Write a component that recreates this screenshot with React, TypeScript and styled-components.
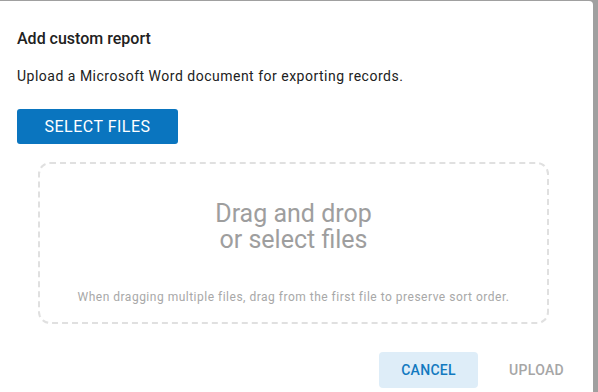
import React from 'react'
import styled, { createGlobalStyle } from 'styled-components'

const GlobalStyle = createGlobalStyle`
  html, body {
    margin: 0;
    padding: 0;
    background: #a0a0a0;
    font-family: Roboto, "Liberation Sans", sans-serif;
  }
`

const Backdrop = styled.div`
  width: 598px;
  height: 392px;
  padding-top: 1px;
  box-sizing: border-box;
  background: #a0a0a0;
  overflow: hidden;
`

const Dialog = styled.div`
  width: 593px;
  height: 400px;
  background: #fff;
  border-top-right-radius: 4px;
  padding: 26px 17px 0 17px;
  box-sizing: border-box;
  display: flex;
  flex-direction: column;
`

const Title = styled.h2`
  margin: 0;
  font-size: 16px;
  line-height: 24px;
  font-weight: 500;
  color: #212121;
`

const Description = styled.p`
  margin: 15px 0 0 0;
  font-size: 14px;
  line-height: 20px;
  letter-spacing: 0.5px;
  color: #212121;
`

const PrimaryButton = styled.button`
  align-self: flex-start;
  margin-top: 23px;
  width: 161px;
  height: 35px;
  border: none;
  border-radius: 3px;
  background: #0a75bf;
  color: #fff;
  font-family: inherit;
  font-size: 16px;
  font-weight: 400;
  text-transform: uppercase;
  letter-spacing: 0.5px;
  cursor: pointer;
`

const DropZone = styled.div`
  margin: 18px 27px 0 21px;
  height: 162px;
  border: 2px dashed #e0e0e0;
  border-radius: 12px;
  box-sizing: border-box;
  display: flex;
  flex-direction: column;
  align-items: center;
`

const DropTitle = styled.div`
  margin-top: 37px;
  font-size: 25px;
  line-height: 26px;
  text-align: center;
  color: #9e9e9e;
`

const DropHint = styled.div`
  margin-top: auto;
  margin-bottom: 18px;
  font-size: 12px;
  line-height: 14px;
  letter-spacing: 0.5px;
  color: #a8a8a8;
`

const Actions = styled.div`
  margin-top: 28px;
  margin-right: -4px;
  display: flex;
  justify-content: flex-end;
  gap: 15px;
`

const TextButton = styled.button<{ $tone: 'primary' | 'disabled' }>`
  height: 36px;
  min-width: ${({ $tone }) => ($tone === 'primary' ? '99px' : '0')};
  padding: 0 16px;
  border: none;
  border-radius: 4px;
  background: ${({ $tone }) => ($tone === 'primary' ? '#deedf8' : 'transparent')};
  color: ${({ $tone }) => ($tone === 'primary' ? '#1279c0' : '#a6a6a6')};
  font-family: inherit;
  font-size: 14px;
  font-weight: 500;
  text-transform: uppercase;
  letter-spacing: 0.3px;
  cursor: pointer;
`

const App = () => {
  return (
    <>
      <GlobalStyle />
      <Backdrop>
        <Dialog>
          <Title>Add custom report</Title>
          <Description>Upload a Microsoft Word document for exporting records.</Description>
          <PrimaryButton>Select files</PrimaryButton>
          <DropZone>
            <DropTitle>
              Drag and drop
              <br />
              or select files
            </DropTitle>
            <DropHint>When dragging multiple files, drag from the first file to preserve sort order.</DropHint>
          </DropZone>
          <Actions>
            <TextButton $tone="primary">Cancel</TextButton>
            <TextButton $tone="disabled">Upload</TextButton>
          </Actions>
        </Dialog>
      </Backdrop>
    </>
  )
}

export default App
